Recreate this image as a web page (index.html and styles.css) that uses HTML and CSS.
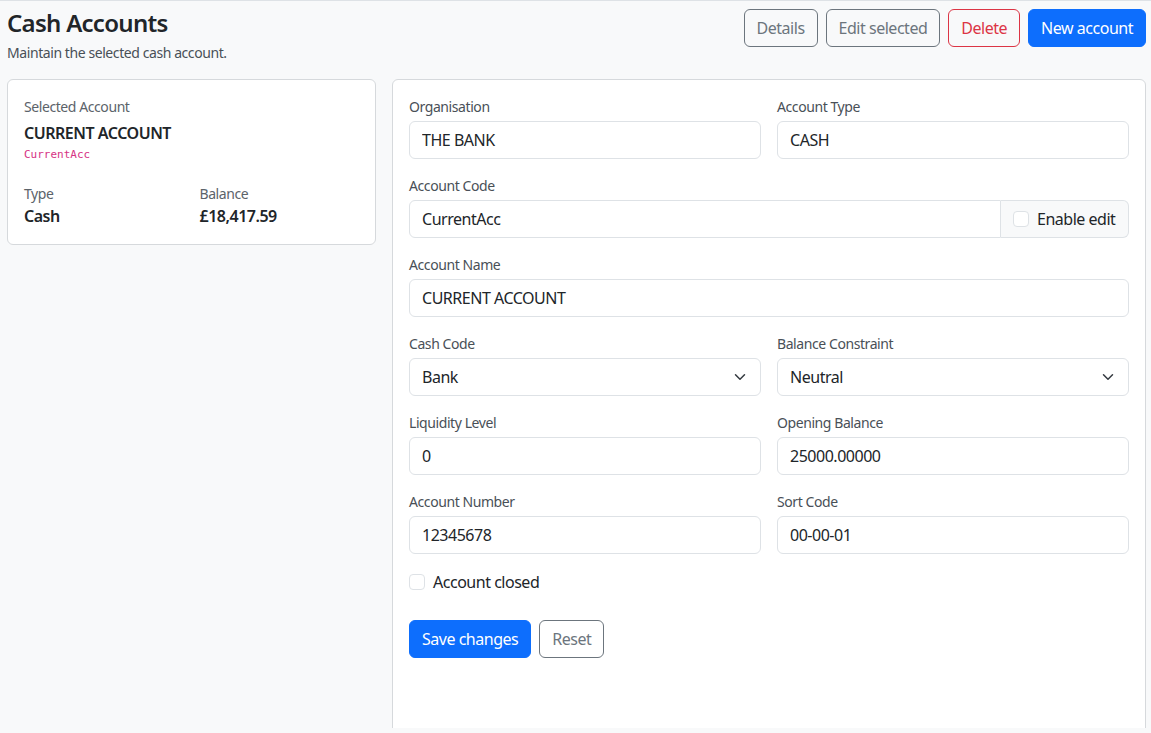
FILE: index.html
```
<!DOCTYPE html>
<html lang="en">

<head>
    <meta charset="UTF-8">
    <meta name="viewport" content="width=device-width, initial-scale=1.0">
    <title>Cash Accounts</title>
    <link rel="stylesheet" href="styles.css">
</head>

<body>
    <div class="page">
        <div class="page_header">
            <div>
                <h1 class="page_title">Cash Accounts</h1>
                <div class="page_subtitle">Maintain the selected cash account.</div>
            </div>
            <div class="page_actions">
                <button class="btn btn_outline_secondary">Details</button>
                <button class="btn btn_outline_secondary">Edit selected</button>
                <button class="btn btn_outline_danger">Delete</button>
                <button class="btn btn_primary">New account</button>
            </div>
        </div>

        <div class="layout">
            <div class="card summary">
                <div class="summary_label">Selected Account</div>
                <div class="summary_name">CURRENT ACCOUNT</div>
                <code class="summary_code">CurrentAcc</code>
                <div class="summary_grid">
                    <div>
                        <div class="summary_label">Type</div>
                        <div class="summary_value">Cash</div>
                    </div>
                    <div>
                        <div class="summary_label">Balance</div>
                        <div class="summary_value">£18,417.59</div>
                    </div>
                </div>
            </div>

            <form class="card editor">
                <div class="form_row">
                    <div class="field">
                        <label class="field_label">Organisation</label>
                        <input class="field_input" type="text" value="THE BANK">
                    </div>
                    <div class="field">
                        <label class="field_label">Account Type</label>
                        <input class="field_input" type="text" value="CASH">
                    </div>
                </div>

                <div class="field">
                    <label class="field_label">Account Code</label>
                    <div class="input_group">
                        <input class="field_input" type="text" value="CurrentAcc">
                        <label class="input_group_addon">
                            <input class="check" type="checkbox">
                            Enable edit
                        </label>
                    </div>
                </div>

                <div class="field">
                    <label class="field_label">Account Name</label>
                    <input class="field_input" type="text" value="CURRENT ACCOUNT">
                </div>

                <div class="form_row">
                    <div class="field">
                        <label class="field_label">Cash Code</label>
                        <div class="field_input field_select">
                            <span>Bank</span>
                            <svg width="16" height="12" viewBox="0 0 16 16"><path d="m2 5 6 6 6-6" fill="none" stroke="#343a40" stroke-width="2" stroke-linecap="round" stroke-linejoin="round"/></svg>
                        </div>
                    </div>
                    <div class="field">
                        <label class="field_label">Balance Constraint</label>
                        <div class="field_input field_select">
                            <span>Neutral</span>
                            <svg width="16" height="12" viewBox="0 0 16 16"><path d="m2 5 6 6 6-6" fill="none" stroke="#343a40" stroke-width="2" stroke-linecap="round" stroke-linejoin="round"/></svg>
                        </div>
                    </div>
                </div>

                <div class="form_row">
                    <div class="field">
                        <label class="field_label">Liquidity Level</label>
                        <input class="field_input" type="text" value="0">
                    </div>
                    <div class="field">
                        <label class="field_label">Opening Balance</label>
                        <input class="field_input" type="text" value="25000.00000">
                    </div>
                </div>

                <div class="form_row">
                    <div class="field">
                        <label class="field_label">Account Number</label>
                        <input class="field_input" type="text" value="12345678">
                    </div>
                    <div class="field">
                        <label class="field_label">Sort Code</label>
                        <input class="field_input" type="text" value="00-00-01">
                    </div>
                </div>

                <label class="form_check">
                    <input class="check" type="checkbox">
                    Account closed
                </label>

                <div class="form_buttons">
                    <button type="button" class="btn btn_primary">Save changes</button>
                    <button type="button" class="btn btn_outline_secondary">Reset</button>
                </div>
            </form>
        </div>
    </div>
</body>

</html>
```

FILE: styles.css
```
* {
    box-sizing: border-box;
    font-family: "Segoe UI", "Noto Sans", sans-serif;
    letter-spacing: -0.03em;
}

body {
    margin: 0;
    background-color: #f8f9fa;
    color: #212529;
}

.page {
    height: 728px;
    overflow: hidden;
    border-top: 1px solid #dee2e6;
    padding: 0 5px 0 7px;
}

.page_header {
    display: flex;
    justify-content: space-between;
    align-items: flex-start;
    padding-top: 8px;
    margin-bottom: 16px;
}

.page_title {
    margin: 0 0 4px 0;
    font-size: 24px;
    font-weight: 600;
    line-height: 1.2;
}

.page_subtitle {
    font-size: 14px;
    line-height: 21px;
    color: #495057;
}

.page_actions {
    display: flex;
    gap: 8px;
}

.btn {
    font-size: 16px;
    line-height: 24px;
    padding: 6px 12px;
    border-radius: 6px;
    border: 1px solid transparent;
    background: none;
    cursor: pointer;
}

.btn_outline_secondary {
    color: #6c757d;
    border-color: #6c757d;
}

.btn_outline_danger {
    color: #dc3545;
    border-color: #dc3545;
}

.btn_primary {
    color: #fff;
    background-color: #0d6efd;
    border-color: #0d6efd;
}

.layout {
    display: grid;
    grid-template-columns: 369px 1fr;
    gap: 16px;
    align-items: start;
}

.card {
    background-color: #fff;
    border: 1px solid #d6d9dc;
    border-radius: 6px;
    padding: 16px;
}

.summary_label {
    font-size: 14px;
    line-height: 21px;
    color: #5c636a;
}

.summary_name {
    margin-top: 6px;
    font-size: 16px;
    font-weight: 600;
    line-height: 21px;
}

.summary_code {
    display: block;
    margin-top: 2px;
    font-family: "DejaVu Sans Mono", monospace;
    letter-spacing: 0;
    font-size: 11px;
    line-height: 18px;
    color: #d63384;
}

.summary_grid {
    display: grid;
    grid-template-columns: 1fr 1fr;
    column-gap: 16px;
    margin-top: 19px;
}

.summary_value {
    font-size: 16px;
    font-weight: 600;
    line-height: 24px;
}

.editor {
    min-height: 700px;
}

.form_row {
    display: grid;
    grid-template-columns: 1fr 1fr;
    column-gap: 16px;
}

.field {
    margin-bottom: 16px;
}

.field_label {
    display: block;
    font-size: 14px;
    line-height: 21px;
    margin-bottom: 4px;
    color: #495057;
}

.field_input {
    display: block;
    width: 100%;
    height: 38px;
    font-size: 16px;
    line-height: 24px;
    padding: 6px 12px;
    color: #212529;
    background-color: #fff;
    border: 1px solid #dee2e6;
    border-radius: 6px;
}

.field_select {
    display: flex;
    justify-content: space-between;
    align-items: center;
}

.input_group {
    display: flex;
}

.input_group .field_input {
    border-radius: 6px 0 0 6px;
}

.input_group_addon {
    display: flex;
    align-items: center;
    gap: 8px;
    flex-shrink: 0;
    width: 128px;
    padding: 0 12px;
    font-size: 16px;
    white-space: nowrap;
    background-color: #f8f9fa;
    border: 1px solid #dee2e6;
    border-left: none;
    border-radius: 0 6px 6px 0;
}

.check {
    appearance: none;
    flex-shrink: 0;
    width: 16px;
    height: 16px;
    margin: 0;
    border: 1px solid #dee2e6;
    border-radius: 4px;
    background-color: #fff;
}

.form_check {
    display: flex;
    align-items: center;
    gap: 8px;
    font-size: 16px;
    line-height: 24px;
    margin-bottom: 26px;
}

.form_buttons {
    display: flex;
    gap: 8px;
}
```
